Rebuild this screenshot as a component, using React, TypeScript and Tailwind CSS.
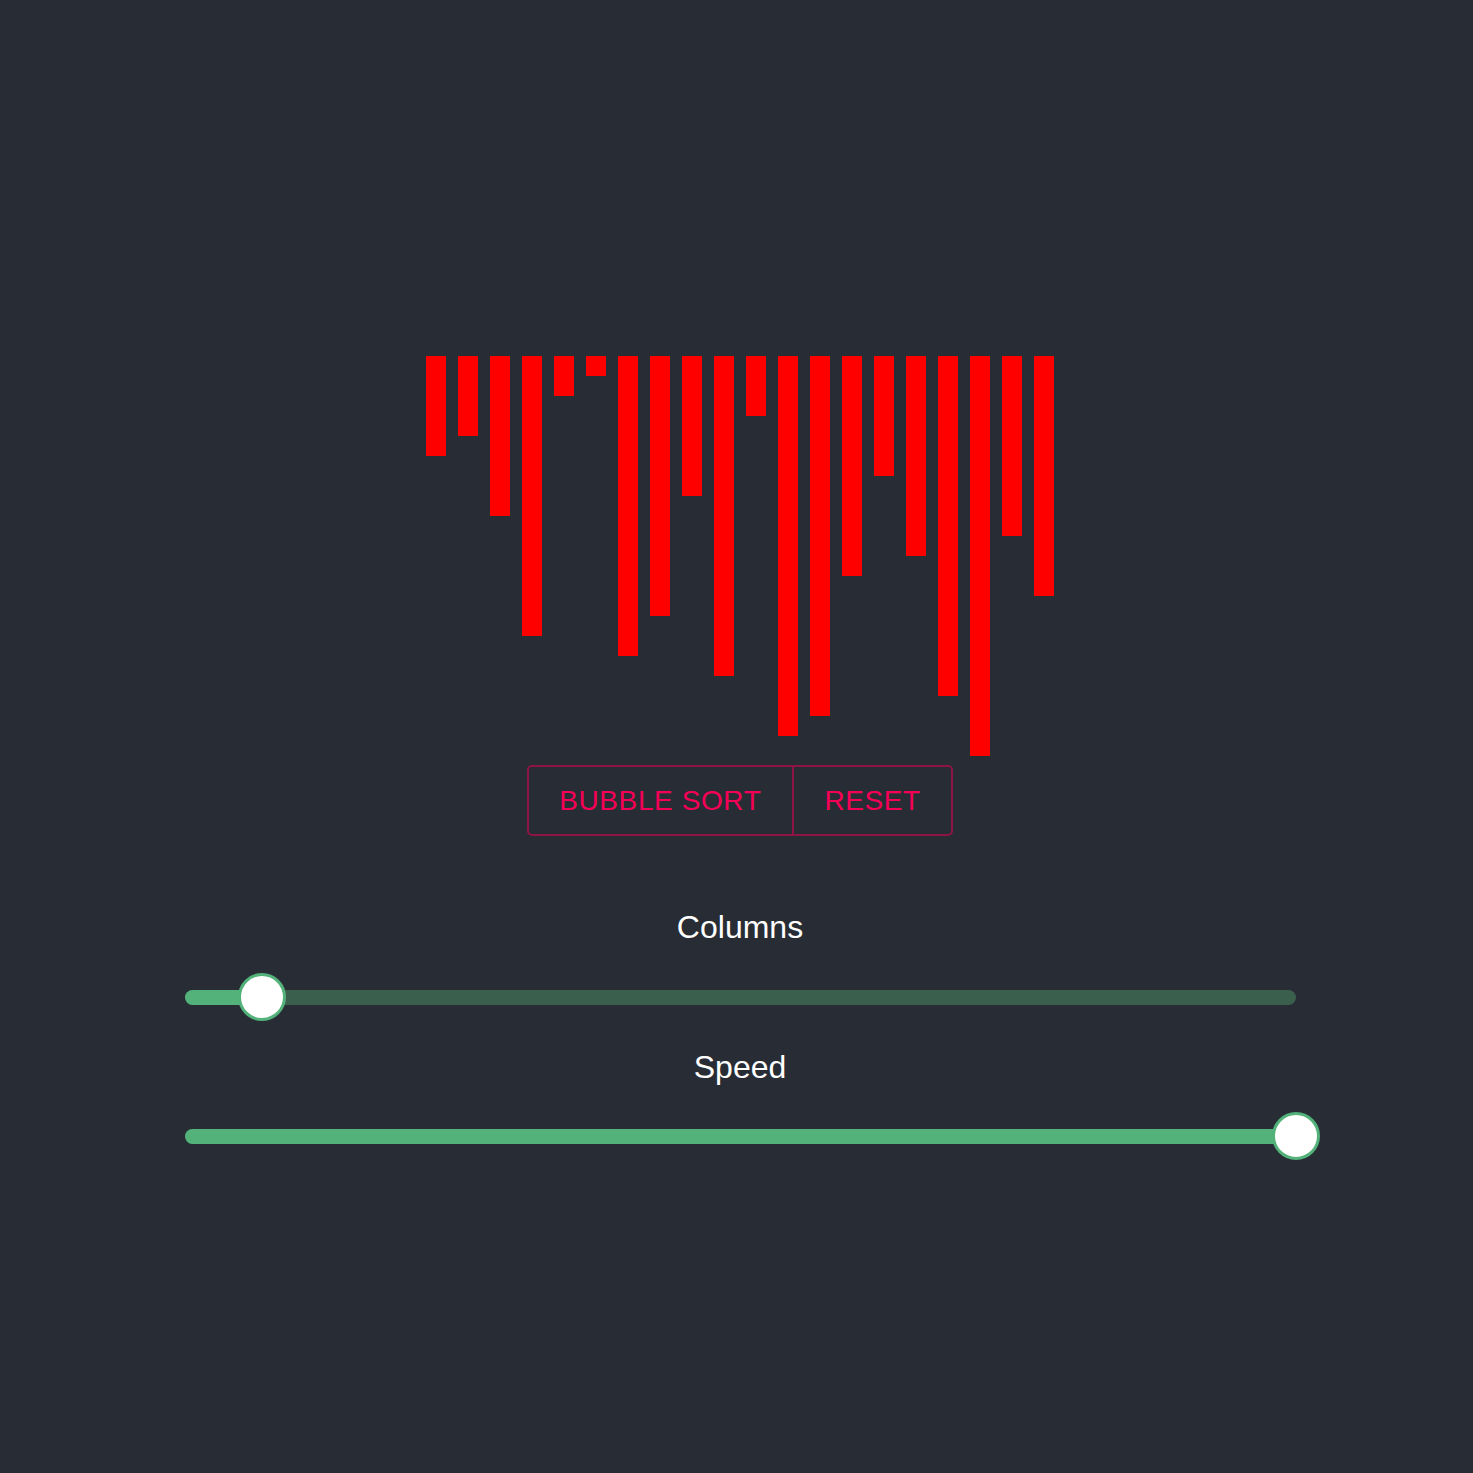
const BARS = [5, 4, 8, 14, 2, 1, 15, 13, 7, 16, 3, 19, 18, 11, 6, 10, 17, 20, 9, 12]

function Slider({ value }: { value: number }) {
  return (
    <div className="relative h-[48px] w-[1111px] flex items-center">
      <div className="h-[15px] w-full rounded-full bg-[#3b5f4d]" />
      <div
        className="absolute left-0 h-[15px] rounded-full bg-[#52b27a]"
        style={{ width: `${value}%` }}
      />
      <div
        className="absolute top-0 h-[48px] w-[48px] -ml-[24px] rounded-full border-[3px] border-[#52b27a] bg-white"
        style={{ left: `${value}%` }}
      />
    </div>
  )
}

export default function App() {
  return (
    <div
      className="min-h-screen w-full bg-[#282c34] pl-[7px] pt-[356px] flex flex-col items-center"
      style={{ fontFamily: '"Liberation Sans", Arial, sans-serif' }}
    >
      <div className="flex items-start gap-[12px] h-[400px]">
        {BARS.map((v, i) => (
          <div key={i} className="w-[20px] bg-[#ff0000]" style={{ height: v * 20 }} />
        ))}
      </div>

      <div className="mt-[9px] flex h-[71px] rounded-[5px] border-2 border-[#8f1446] text-[28px] tracking-[0.6px] text-[#f50057]">
        <button type="button" className="pl-[30px] pr-[31px] uppercase">Bubble Sort</button>
        <div className="w-[2px] bg-[#8f1446]" />
        <button type="button" className="px-[30px] uppercase">Reset</button>
      </div>

      <p className="mt-[67px] text-[32px] leading-[48px] text-white">Columns</p>
      <div className="mt-[22px]">
        <Slider value={7} />
      </div>
      <p className="mt-[22px] text-[32px] leading-[48px] text-white">Speed</p>
      <div className="mt-[21px]">
        <Slider value={100} />
      </div>
    </div>
  )
}
